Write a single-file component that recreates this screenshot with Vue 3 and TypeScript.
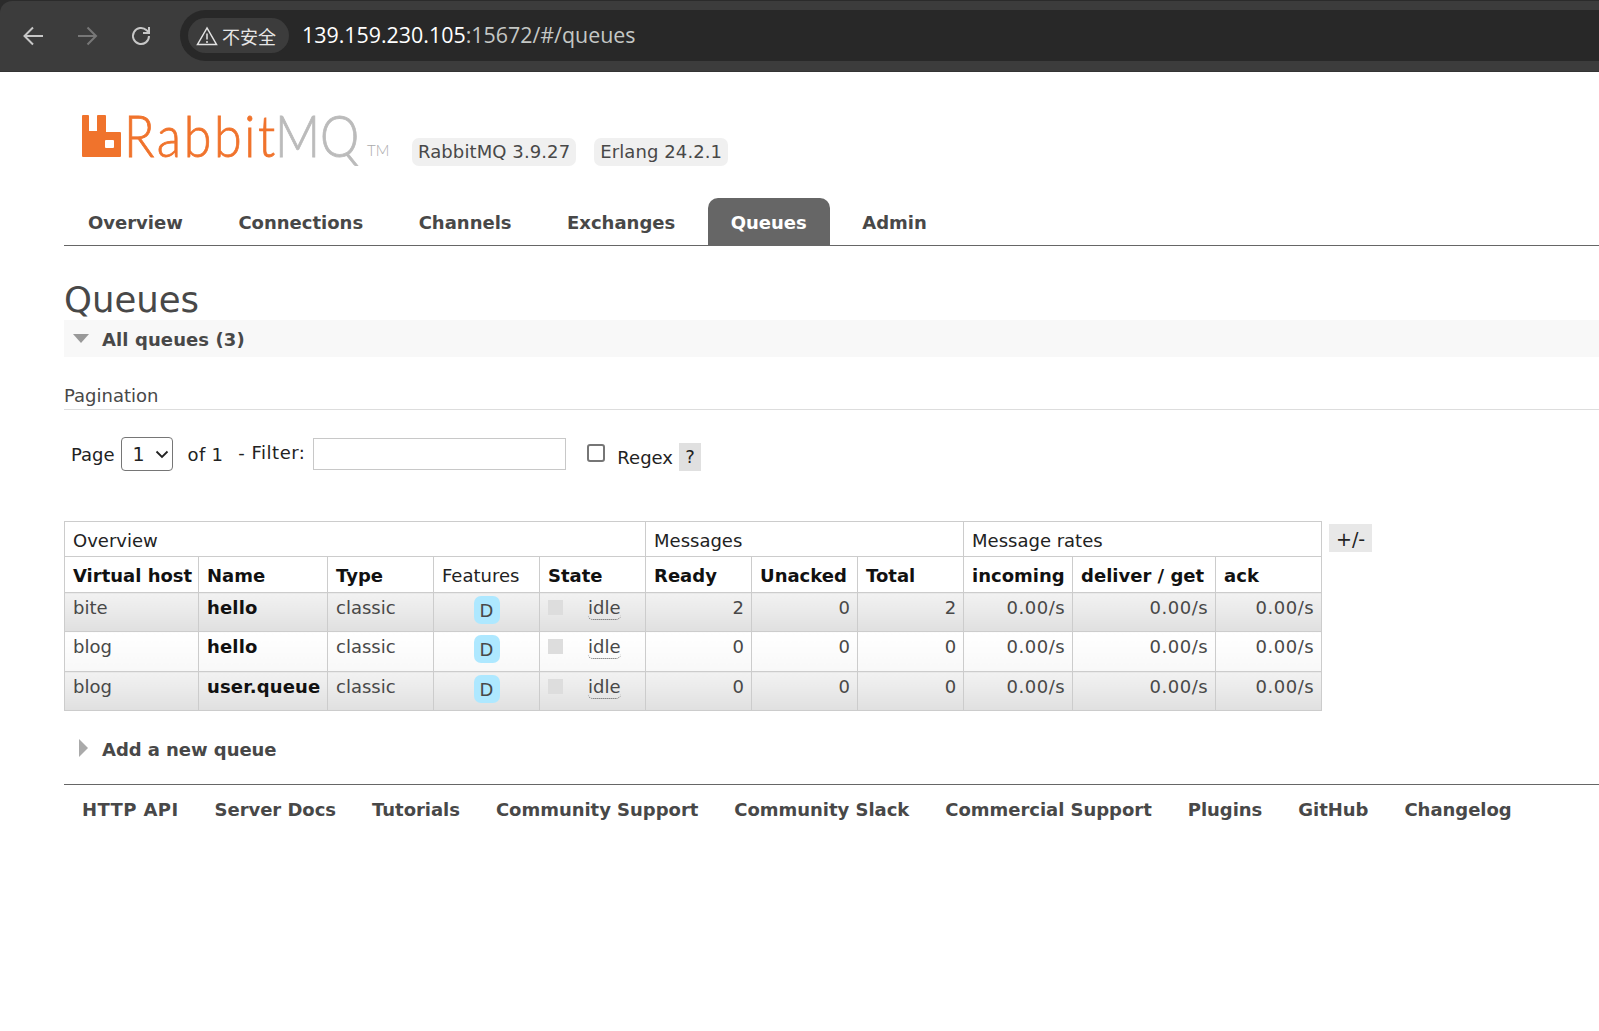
<script setup lang="ts">
const tabs = ['Overview', 'Connections', 'Channels', 'Exchanges', 'Queues', 'Admin']
const rows = [
  { vhost: 'bite', name: 'hello', ready: 2, unacked: 0, total: 2 },
  { vhost: 'blog', name: 'hello', ready: 0, unacked: 0, total: 0 },
  { vhost: 'blog', name: 'user.queue', ready: 0, unacked: 0, total: 0 },
]
const footer = ['HTTP API', 'Server Docs', 'Tutorials', 'Community Support', 'Community Slack', 'Commercial Support', 'Plugins', 'GitHub', 'Changelog']
</script>

<template>
  <div class="page">
    <header class="chrome">
      <div class="bar">
        <div class="tool"><svg width="24" height="24" viewBox="0 0 24 24"><path d="M22 12H4M12 3.500 3.500 12l8.500 8.500" fill="none" stroke="#c7c7c7" stroke-width="2"/></svg></div>
        <div class="tool"><svg width="24" height="24" viewBox="0 0 24 24"><path d="M3 12h18M12.500 3.500 21 12l-8.500 8.500" fill="none" stroke="#777" stroke-width="2"/></svg></div>
        <div class="tool"><svg width="24" height="24" viewBox="0 0 24 24"><path d="M20 12a8 8 0 1 1-2.400-5.700L20 8.500M20 3v6h-6" fill="none" stroke="#c7c7c7" stroke-width="2"/></svg></div>
        <div class="omnibox">
          <div class="secure">
            <svg width="22" height="20" viewBox="0 0 22 20"><path d="M11 2 1.500 18.500h19zM11 7.500v6M11 15v2" fill="none" stroke="#e3e3e3" stroke-width="1.500"/></svg>
            <span>不安全</span>
          </div>
          <div class="url"><span class="host">139.159.230.105</span>:15672/#/queues</div>
        </div>
      </div>
    </header>

    <main class="content">
      <div class="brand">
        <div class="logo">
          <svg class="mark" width="39" height="42" viewBox="0 0 39 42"><path fill="#f0732c" fill-rule="evenodd" d="M0 1a1 1 0 0 1 1-1h5a1 1 0 0 1 1 1v15h8V1a1 1 0 0 1 1-1h7a1 1 0 0 1 1 1v16h14a1 1 0 0 1 1 1v23a1 1 0 0 1-1 1H1a1 1 0 0 1-1-1zM24 25a1 1 0 0 0-1 1v6a1 1 0 0 0 1 1h7a1 1 0 0 0 1-1v-6a1 1 0 0 0-1-1z"/></svg>
          <span class="rabbit">Rabbit</span><span class="mq">MQ</span><span class="tm">TM</span>
        </div>
        <span class="badge first">RabbitMQ 3.9.27</span>
        <span class="badge">Erlang 24.2.1</span>
      </div>

      <nav class="tabs">
        <a v-for="t in tabs" :key="t" class="tab" :class="{ active: t === 'Queues' }">{{ t }}</a>
      </nav>

      <h1>Queues</h1>
      <div class="section-head"><i class="tri-down"></i><span>All queues (3)</span></div>

      <h3 class="pag-title">Pagination</h3>
      <div class="filters">
        <span class="lbl-page">Page</span>
        <div class="select"><span>1</span><svg width="14" height="9" viewBox="0 0 14 9"><path d="M1.500 1.500 7 7l5.500-5.500" fill="none" stroke="#222" stroke-width="1.800"/></svg></div>
        <span class="lbl-of">of 1</span>
        <span class="lbl-filter">- Filter:</span>
        <div class="input"></div>
        <div class="check"></div>
        <span class="lbl-regex">Regex</span>
        <span class="help">?</span>
      </div>

      <div class="table-row">
        <table>
          <colgroup>
            <col class="c1"><col class="c2"><col class="c3"><col class="c4"><col class="c5">
            <col class="c6"><col class="c6"><col class="c6">
            <col class="c7"><col class="c8"><col class="c9">
          </colgroup>
          <thead>
            <tr class="group">
              <th colspan="5">Overview</th>
              <th colspan="3">Messages</th>
              <th colspan="3">Message rates</th>
            </tr>
            <tr class="cols">
              <th>Virtual host</th><th>Name</th><th>Type</th><th class="plain">Features</th><th>State</th>
              <th>Ready</th><th>Unacked</th><th>Total</th>
              <th>incoming</th><th>deliver / get</th><th>ack</th>
            </tr>
          </thead>
          <tbody>
            <tr v-for="(r, i) in rows" :key="i" :class="i % 2 === 0 ? 'alt1' : 'alt2'">
              <td>{{ r.vhost }}</td>
              <td class="qname">{{ r.name }}</td>
              <td>classic</td>
              <td class="feat"><span class="d">D</span></td>
              <td class="state"><i class="sq"></i><span class="idle">idle</span></td>
              <td class="num">{{ r.ready }}</td>
              <td class="num">{{ r.unacked }}</td>
              <td class="num">{{ r.total }}</td>
              <td class="num rate">0.00/s</td>
              <td class="num rate">0.00/s</td>
              <td class="num rate">0.00/s</td>
            </tr>
          </tbody>
        </table>
        <span class="plusminus">+/-</span>
      </div>

      <div class="add"><i class="tri-right"></i><span>Add a new queue</span></div>

      <footer>
        <a v-for="f in footer" :key="f">{{ f }}</a>
      </footer>
    </main>
  </div>
</template>

<style>
html, body { margin: 0; background: #fff; overflow: hidden; }
</style>

<style scoped>
.page { width: 1599px; height: 1031px; overflow: hidden; font-family: "DejaVu Sans", Verdana, sans-serif; font-size: 18px; color: #484848; }
.chrome { height: 72px; box-sizing: border-box; background: #2b2b2b; padding-top: 1px; }
.bar { height: 71px; box-sizing: border-box; background: #3c3c3c; border-top-left-radius: 12px; border-bottom: 1px solid #333; padding: 0 0 1px 21px; display: flex; align-items: center; }
.tool { width: 24px; height: 24px; margin-right: 30px; }
.omnibox { flex: 1; margin-left: -3px; height: 51px; background: #282828; border-radius: 26px 0 0 26px; display: flex; align-items: center; padding-left: 8px; }
.secure { width: 101px; height: 35px; box-sizing: border-box; background: #3c3c3c; border-radius: 18px; display: flex; align-items: center; padding-left: 8px; color: #e6e6e6; font: 18px "Noto Sans CJK SC", sans-serif; gap: 4px; }
.url { margin-left: 13px; margin-top: -2px; font: 21.400px "Open Sans", sans-serif; color: #c4c7c5; }
.host { color: #fff; }

.content { padding-left: 64px; }
.brand { display: flex; align-items: flex-end; padding: 43px 0 0 18px; height: 51px; }
.logo { display: flex; align-items: flex-end; height: 50px; width: 330px; flex: none; position: relative; margin-bottom: 1px; }
.mark { margin-bottom: 8px; flex: none; }
.rabbit, .mq { display: inline-block; flex: none; white-space: nowrap; font-family: Lato, sans-serif; font-weight: 300; font-size: 57px; line-height: 50px; margin-bottom: 5px; -webkit-text-stroke: .8px currentColor; transform-origin: left; }
.rabbit { color: #f0732c; margin-left: 3px; width: 151px; letter-spacing: 3px; transform: scaleX(.88); }
.mq { color: #bbb; width: 80px; transform: scaleX(.87); }
.tm { font: 300 15px Lato, sans-serif; color: #aaa; margin: 0 0 6px 12px; }
.badge { background: #f0f0f0; border-radius: 7px; height: 28px; line-height: 28px; padding: 0 6px; margin-left: 18px; color: #484848; letter-spacing: .1px; }
.badge.first { margin-left: 0; }

.tabs { display: flex; margin-top: 32px; height: 47px; border-bottom: 1px solid #666; padding-left: 1px; }
.tab { height: 47px; box-sizing: border-box; line-height: 49px; padding: 0 23px; margin-right: 9.500px; font-weight: 700; color: #484848; border-radius: 10px 10px 0 0; }
.tab.active { background: #666; color: #fff; }

h1 { margin: 29px 0 0; height: 45px; line-height: 50px; font-size: 35.500px; font-weight: 400; color: #484848; }
.section-head { height: 37px; background: #f8f8f8; display: flex; align-items: center; padding-left: 9px; font-weight: 700; letter-spacing: .1px; }
.section-head span { padding-top: 2px; }
.tri-down { width: 0; height: 0; border: 8.500px solid transparent; border-top: 9px solid #999; border-bottom: 0; margin-right: 13px; }
.pag-title { margin: 29px 0 0; height: 23px; line-height: 19px; font-size: 18px; font-weight: 400; border-bottom: 1px solid #ddd; color: #484848; }

.filters { position: relative; height: 34px; margin-top: 27px; display: flex; align-items: center; color: #222; }
.lbl-page { margin-left: 7px; }
.select { width: 52px; height: 34px; box-sizing: border-box; border: 1px solid #767676; border-radius: 4px; margin-left: 6px; display: flex; align-items: center; padding-left: 11px; gap: 10px; font-size: 19px; }
.lbl-of { margin-left: 15px; letter-spacing: .3px; }
.lbl-filter { margin-left: 15px; margin-top: -3px; letter-spacing: .5px; }
.input { width: 253px; height: 32px; box-sizing: border-box; border: 1px solid #c8c8c8; margin-left: 8px; margin-top: -1px; }
.check { width: 18px; height: 18px; box-sizing: border-box; border: 2px solid #767676; border-radius: 3px; margin-left: 21px; margin-top: -2px; }
.lbl-regex { margin-left: 12px; margin-top: 6px; }
.help { width: 22px; height: 28px; line-height: 28px; text-align: center; background: #e0e0e0; margin-left: 6px; margin-top: 6px; }

.table-row { display: flex; align-items: flex-start; margin-top: 50px; }
table { border-collapse: collapse; table-layout: fixed; width: 1258px; color: #484848; }
.c1 { width: 134px; } .c2 { width: 129px; } .c3 { width: 106px; } .c4 { width: 106px; } .c5 { width: 106px; }
.c6 { width: 106px; } .c7 { width: 109px; } .c8 { width: 143px; } .c9 { width: 106px; }
th, td { border: 1px solid #ccc; padding: 0 7px 0 8px; text-align: left; vertical-align: top; white-space: nowrap; box-sizing: border-box; overflow: visible; }
.group th { height: 35px; padding-top: 3px; line-height: 31px; font-weight: 400; color: #222; }
.cols th { height: 36px; padding-top: 2px; line-height: 33px; font-weight: 700; color: #111; }
.cols th.plain { font-weight: 400; color: #222; padding-left: 8px; }
td { height: 39px; padding-top: 1px; line-height: 28px; }
.alt2 td { height: 40px; }
.alt1 td { background: linear-gradient(#f2f2f2, #e0e0e0); }
.alt2 td { background: linear-gradient(#fff, #f8f8f8); }
.qname { font-weight: 700; color: #111; letter-spacing: .15px; }
.feat { text-align: center; padding: 0; }
.d { display: inline-block; width: 26px; height: 28px; line-height: 29px; margin-top: 3px; background: #aee8ff; border-radius: 7px; text-align: center; color: #484848; vertical-align: top; }
.state { position: relative; }
.sq { position: absolute; left: 8px; top: 7px; width: 15px; height: 15px; background: #ddd; }
.idle { position: absolute; left: 48px; top: 1px; height: 25px; border-bottom: 1px dotted #555; border-radius: 0 0 5px 5px; line-height: 28px; }
.num { text-align: right; }
.rate { letter-spacing: .5px; }
.plusminus { margin: 3px 0 0 7px; width: 43px; height: 28px; line-height: 30px; text-align: center; background: #e8e8e8; color: #222; font-size: 19px; }

.add { display: flex; align-items: center; margin-top: 28px; height: 20px; padding-left: 15px; font-weight: 700; letter-spacing: -.05px; }
.tri-right { width: 0; height: 0; border: 9px solid transparent; border-left: 9px solid #aaa; border-right: 0; margin-right: 14px; margin-top: -3px; }
footer { margin-top: 25px; border-top: 1px solid #666; padding: 14px 0 0 18px; display: flex; gap: 36px; font-weight: 700; line-height: 22px; letter-spacing: -.03px; }
footer a:first-child { letter-spacing: .4px; }
</style>
